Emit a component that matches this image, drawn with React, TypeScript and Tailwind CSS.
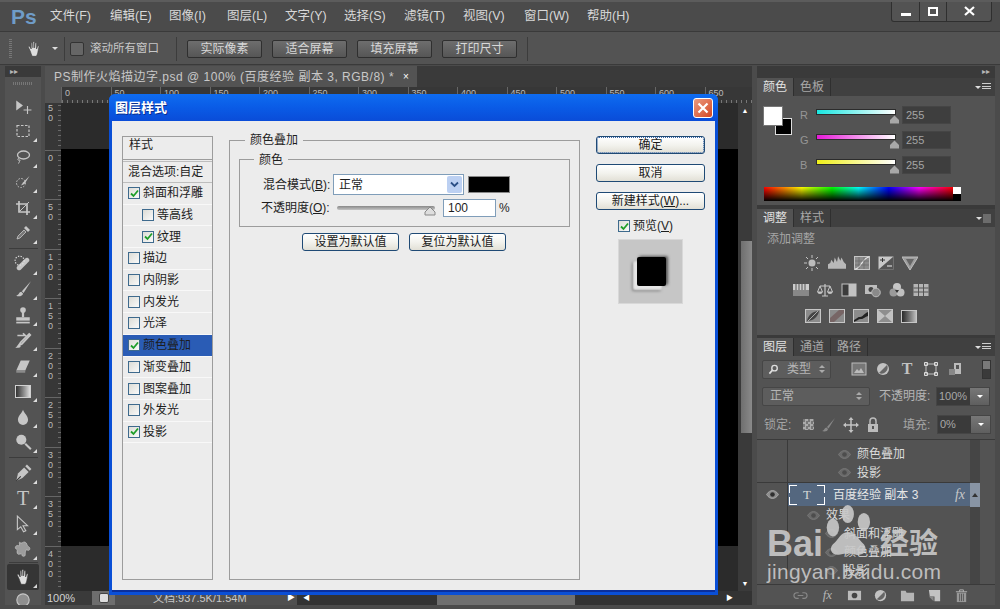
import type { ReactNode } from "react";

const menus = [
  { label: "文件(F)", w: "w-[43px]" },
  { label: "编辑(E)", w: "w-[42px]" },
  { label: "图像(I)", w: "w-[41px]" },
  { label: "图层(L)", w: "w-[41px]" },
  { label: "文字(Y)", w: "w-[42px]" },
  { label: "选择(S)", w: "w-[43px]" },
  { label: "滤镜(T)", w: "w-[42px]" },
  { label: "视图(V)", w: "w-[44px]" },
  { label: "窗口(W)", w: "w-[46px]" },
  { label: "帮助(H)", w: "w-[44px]" },
];
const fxRows = [
  { name: "斜面和浮雕", on: true },
  { name: "等高线", sub: true },
  { name: "纹理", on: true, sub: true },
  { name: "描边" },
  { name: "内阴影" },
  { name: "内发光" },
  { name: "光泽" },
  { name: "颜色叠加", on: true, active: true },
  { name: "渐变叠加" },
  { name: "图案叠加" },
  { name: "外发光" },
  { name: "投影", on: true },
];
const rulerTop = ["0", "50", "100", "150", "200", "250", "300", "350", "400", "450", "500", "550", "600", "650"];
const rulerLeft = ["50", "0", "50", "100", "150", "200", "250", "300", "350", "400"];

function Ic({ s = 16, children, c = "" }: { s?: number; children: ReactNode; c?: string }) {
  return (
    <svg width={s} height={s} viewBox="0 0 16 16" className={`shrink-0 ${c}`}>
      {children}
    </svg>
  );
}

const G = "#c6c6c6";

function Tool({ children, corner = true, active = false }: { children: ReactNode; corner?: boolean; active?: boolean }) {
  return (
    <div className={`relative flex h-[25.5px] w-[32px] shrink-0 items-center justify-center ${active ? "rounded-[2px] bg-[#353535]" : ""}`}>
      {children}
      {corner && <span className="absolute bottom-[2px] right-[2px] size-0 border-b-[4px] border-l-[4px] border-b-white/80 border-l-transparent" />}
    </div>
  );
}

function Sep({ wide = true }: { wide?: boolean }) {
  return <div className={`h-px w-[29px] shrink-0 bg-[#3c3c3c] ${wide ? "my-[2px]" : ""}`} />;
}

function Hand({ s = 18 }: { s?: number }) {
  return (
    <Ic s={s}>
      <path d="M4.5 9.5 3 6.5c-.3-.9.9-1.3 1.3-.5L5.5 8V3c0-.9 1.2-.9 1.3 0l.3 4V2c0-.9 1.3-.9 1.4 0v5l.5-4.2c.1-.9 1.3-.8 1.3.1V8l.9-2.4c.3-.8 1.4-.5 1.2.4l-1 5c-.3 1.700-1 3-1.500 3.500H6.500C5.700 13.500 5.200 11 4.500 9.500Z" fill="#dedede" stroke="#333" strokeWidth=".5" />
    </Ic>
  );
}

function Eye({ dim = false }: { dim?: boolean }) {
  return (
    <svg width="13" height="9" viewBox="0 0 13 9" className="shrink-0">
      <path d="M.5 4.500C2.500 1.500 4.500.5 6.500.5s4 1 6 4c-2 3-4 4-6 4s-4-1-6-4Z" fill={dim ? "#6a6a6a" : "#8e8e8e"} stroke={dim ? "#7e7e7e" : "#b5b5b5"} strokeWidth=".7" />
      <circle cx="6.500" cy="4.500" r="2.300" fill={dim ? "#4d4d4d" : "#2f2f2f"} />
    </svg>
  );
}

function Toolbar() {
  return (
    <div className="flex w-[36px] shrink-0 flex-col items-center overflow-hidden bg-[#535353]">
      <div className="flex h-[11px] w-full shrink-0 items-center bg-[#3a3a3a] pl-[5px] text-[8px] leading-none text-[#b5b5b5]">▸▸</div>
      <div className="mt-[5px] mb-[8px] h-[3px] w-[20px] shrink-0 bg-[repeating-linear-gradient(90deg,#777_0,#777_1px,transparent_1px,transparent_2px)]" />
      <div className="flex flex-col items-center">
        <Tool corner={false}>
          <Ic s={18}><path d="M2 3v9l6-4.500Z" fill={G} /><path d="M12 8v7M8.500 11.500h7" stroke={G} strokeWidth="1" /></Ic>
        </Tool>
        <Tool><Ic><rect x="2" y="2.500" width="12" height="11" fill="none" stroke={G} strokeWidth="1.200" strokeDasharray="2.500 1.500" /></Ic></Tool>
        <Tool><Ic><ellipse cx="8.500" cy="6" rx="6" ry="4" fill="none" stroke={G} strokeWidth="1.300" /><path d="M4 9c-2 1-1 3 .5 2s-.5 2.500-1 3.500" fill="none" stroke={G} strokeWidth="1" /></Ic></Tool>
        <Tool><Ic><circle cx="6" cy="9" r="4.500" fill="none" stroke={G} strokeDasharray="1.500 1.500" /><path d="M14.500 2 8 8.500l-2 3 3.500-1.500Z" fill={G} /></Ic></Tool>
        <Tool><Ic><path d="M1 4h11v11M4 1v11h11" fill="none" stroke={G} strokeWidth="1.700" /><path d="M4 12 14 2" stroke={G} /></Ic></Tool>
        <Tool><Ic><path d="m2 14 1-3 6-6 2 2-6 6Z" fill="#777" stroke={G} strokeWidth=".8" /><path d="m9 3 2-2 4 4-2 2Z" fill={G} /></Ic></Tool>
      </div>
      <Sep />
      <div className="flex flex-col items-center">
        <Tool><Ic s={18}><path d="m3 10 7-7c2-2 5 1 3 3l-7 7c-2 2-5-1-3-3Z" fill={G} /><circle cx="5" cy="5" r="4" fill="none" stroke="#ddd" strokeDasharray="1.200 1.200" /></Ic></Tool>
        <Tool><Ic s={18}><path d="M15 1 7 10l1.500 1.500Z" fill={G} /><path d="M6.500 10.500c-2 0-2 3-4.500 3.500 2 1 6 .5 6-2Z" fill={G} /></Ic></Tool>
        <Tool><Ic s={18}><circle cx="8" cy="3.500" r="2.500" fill={G} /><rect x="7" y="5" width="2" height="5" fill={G} /><rect x="2" y="10" width="12" height="3" fill={G} /><rect x="2" y="14" width="12" height="1.500" fill={G} /></Ic></Tool>
        <Tool><Ic s={18}><path d="M3 4h7l-2-2M14 2 6 10l-2 3 3-1.500L15 3" fill="none" stroke={G} strokeWidth="1.500" /><path d="M1 15c2-.5 2-3 4-3l1 2c-1 1-3 1-5 1Z" fill={G} /></Ic></Tool>
        <Tool><Ic s={18}><path d="M6 3h8l-4 9H2Z" fill={G} /><path d="M2 12h8v2H2Z" fill="#8a8a8a" /></Ic></Tool>
        <Tool>
          <div className="h-[13px] w-[16px] border border-[#d0d0d0] bg-gradient-to-r from-[#333] to-[#ddd]" />
        </Tool>
        <Tool><Ic s={18}><path d="M8 1.500c1 3 4.500 5.500 4.500 9a4.500 4.500 0 0 1-9 0c0-3.500 3.500-6 4.500-9Z" fill={G} /></Ic></Tool>
        <Tool><Ic s={18}><circle cx="6.500" cy="6" r="4.500" fill={G} /><path d="m10 9.500 5 5" stroke={G} strokeWidth="1.800" /></Ic></Tool>
      </div>
      <Sep />
      <div className="flex flex-col items-center">
        <Tool><Ic s={18}><path d="m2 15 1.500-6.500L9 3l4 4-5.500 5.500Z" fill={G} /><path d="m10 2 1.500-1.500 4 4L14 6Z" fill={G} /><path d="m2 15 4-4" stroke="#333" /></Ic></Tool>
        <Tool>
          <span className="font-['Liberation_Serif',serif] text-[20px] leading-none text-[#c6c6c6]">T</span>
        </Tool>
        <Tool><Ic s={18}><path d="M3 1v12l3-2.500 2.500 4.500 2-1-2.500-4.500h4Z" fill="#555" stroke={G} strokeWidth="1" /></Ic></Tool>
        <Tool><Ic s={18}><path d="M5 2c2 2 3-1 5 0s1 3 3 4 1 4-1 3-2 2-2 4-3 2-3 0-3 1-4-1 1-3-1-4 0-4 2-3 0-3 1-3Z" fill="#9c9c9c" stroke={G} strokeWidth=".6" /></Ic></Tool>
      </div>
      <Sep wide={false} />
      <div className="mt-px flex flex-col items-center">
        <Tool active><Hand /></Tool>
        <div className="-mt-[2px]"><Tool corner={false}><Ic s={18}><circle cx="8" cy="8" r="5.500" fill="#8f8f8f" stroke={G} /></Ic></Tool></div>
      </div>
    </div>
  );
}

function Ruler() {
  return (
    <div className="flex h-[16px] shrink-0 bg-[#373737]">
      <div className="h-full w-[16px] shrink-0 bg-[#535353]" />
      <div className="flex min-w-0 flex-1 overflow-hidden">
        {rulerTop.map((n) => (
          <div key={n} className="relative h-full w-[49.5px] shrink-0 border-l border-[#666] pl-[3px] text-[9px] leading-[13px] text-[#bbb]">
            {n}
            <div className="absolute bottom-0 left-0 h-[3px] w-full bg-[repeating-linear-gradient(90deg,#777_0,#777_1px,transparent_1px,transparent_5px)]" />
          </div>
        ))}
      </div>
    </div>
  );
}

function Pasteboard() {
  return (
    <div className="flex min-h-0 flex-1">
      <div className="w-[16px] shrink-0 overflow-hidden bg-[#373737]">
        <div className="-mt-[3px]">
          {rulerLeft.map((n, i) => (
            <div key={i} className="flex h-[49.5px] flex-col items-start border-t border-[#666] pt-[2px] pl-[3px] bg-[repeating-linear-gradient(180deg,transparent_0,transparent_4px,#6a6a6a_4px,#6a6a6a_5px)] bg-[length:3px_100%] bg-right bg-no-repeat">
              {n.split("").map((d, j) => (
                <span key={j} className="text-[9px] leading-[10px] text-[#bbb]">{d}</span>
              ))}
            </div>
          ))}
        </div>
      </div>
      <div className="flex min-w-0 flex-1 flex-col">
        <div className="h-[46px] shrink-0 bg-[#2b2b2b]" />
        <div className="flex-1 bg-black" />
        <div className="h-[45px] shrink-0 bg-[#2b2b2b]" />
      </div>
      <div className="flex w-[14px] shrink-0 flex-col bg-[#3a3a3a]">
        <div className="flex h-[16px] shrink-0 items-center justify-center text-[7px] text-white">▲</div>
        <div className="ml-[3px] mt-[122px] h-[192px] w-[11px] bg-gradient-to-r from-[#6f6f6f] to-[#8a8a8a]" />
        <div className="mt-auto flex h-[14px] shrink-0 items-center justify-center text-[7px] text-white">▼</div>
      </div>
    </div>
  );
}

function StatusBar() {
  return (
    <div className="flex h-[14px] shrink-0 items-center bg-[#3a3a3a] text-[#d2d2d2]">
      <div className="flex h-full w-[47px] shrink-0 items-center bg-[#3a3a3a] pl-[2px] text-[11px]">100%</div>
      <div className="flex h-full w-[23px] shrink-0 items-center justify-center bg-[#6e6e6e]">
        <div className="h-[10px] w-[10px] rounded-[2px] border border-[#444] bg-[#ddd]" />
      </div>
      <div className="flex h-full w-[170px] shrink-0 items-center bg-[#505050] pl-[38px] text-[11px] text-[#c8c8c8]">文档:937.5K/1.54M</div>
      <div className="flex h-full w-[12px] shrink-0 items-center justify-center bg-[#505050] text-[8px] text-white">▶</div>
      <div className="flex h-full flex-1 items-center bg-[#333]">
        <span className="ml-[6px] text-[7px] text-white">◀</span>
        <div className="ml-[127px] h-full w-[138px] bg-[#6f6f6f]" />
        <span className="ml-auto mr-[19px] text-[7px] text-white">▶</span>
      </div>
    </div>
  );
}

function Check({ on }: { on?: boolean }) {
  return (
    <div className="flex size-[12px] shrink-0 items-center justify-center border border-[#3e6a8d] bg-gradient-to-br from-[#dcdcd6] to-[#fafafa]">
      {on && (
        <svg width="9" height="9" viewBox="0 0 9 9">
          <path d="M1 4.500 3.500 7 8 1.500" fill="none" stroke="#1f9e2a" strokeWidth="1.800" />
        </svg>
      )}
    </div>
  );
}

function XpButton({ label, w, def }: { label: ReactNode; w: string; def?: boolean }) {
  return (
    <button className={`flex h-[18px] ${w} items-center justify-center rounded-[3px] border border-[#1f4a75] bg-gradient-to-b from-white via-[#f3f3ee] to-[#e2e0d6] text-[12px] leading-none text-[#1a1a1a] ${def ? "outline-1 -outline-offset-2 outline-dotted outline-[#3d68a8]" : ""}`}>
      {label}
    </button>
  );
}

function Dialog() {
  return (
    <div className="absolute left-[109px] top-[94px] flex h-[501px] w-[609px] flex-col overflow-hidden rounded-t-[6px] bg-[#0a4fd6]">
      <div className="flex h-[27px] shrink-0 items-center justify-between bg-gradient-to-b from-[#0f6cf0] via-[#0a5be6] to-[#0a4cd8] pl-[6px] pr-[5px]">
        <span className="text-[13px] font-bold text-white [text-shadow:1px_1px_0_#0a2f90]">图层样式</span>
        <div className="flex size-[20px] items-center justify-center rounded-[3px] border border-white bg-gradient-to-br from-[#e99a80] to-[#d4431c]">
          <svg width="12" height="12" viewBox="0 0 12 12"><path d="m1.500 1.500 9 9m0-9-9 9" stroke="white" strokeWidth="2.200" /></svg>
        </div>
      </div>
      <div className="mx-[3px] mb-[3px] flex min-h-0 flex-1 border-b-2 border-[#0a2f9c] bg-[#ececec] pl-[10px] pt-[15px] text-[#1d1d1d]">
        <div className="flex h-[444px] w-[91px] shrink-0 flex-col border border-[#9c9c9c] text-[12px]">
          <div className="h-[23px] shrink-0 border-b border-[#9c9c9c] pl-[6px] leading-[16px]">样式</div>
          <div className="mt-[1px] h-[22px] shrink-0 border-y border-[#bdbdbd] pl-[5px] leading-[20px] whitespace-nowrap">混合选项:自定</div>
          {fxRows.map((r) => (
            <div key={r.name} className={`flex h-[21.7px] shrink-0 items-center gap-[3px] border-b border-[#f8f8f8] ${r.sub ? "pl-[19px]" : "pl-[5px]"} ${r.active ? "bg-[#2a5cb5]" : ""}`}>
              <Check on={r.on} />
              <span className="whitespace-nowrap">{r.name}</span>
            </div>
          ))}
        </div>
        <div className="relative ml-[16px] mt-[4px] h-[440px] w-[351px] shrink-0 border border-[#9c9c9c] px-[9px] pt-[18px] text-[12px]">
          <span className="absolute -top-[9px] left-[15px] bg-[#ececec] px-[5px] leading-[16px]">颜色叠加</span>
          <div className="relative h-[68px] border border-[#9c9c9c] pt-[14px]">
            <span className="absolute -top-[8px] left-[14px] bg-[#ececec] px-[5px] leading-[16px]">颜色</span>
            <div className="flex items-center pl-[23px]">
              <span className="w-[70px] whitespace-nowrap">混合模式(<u>B</u>):</span>
              <div className="flex h-[21px] w-[131px] items-center justify-between border border-[#7f9db9] bg-white pl-[5px] pr-[1px]">
                正常
                <div className="flex h-[17px] w-[15px] items-center justify-center rounded-[2px] bg-[#bcd0f2]">
                  <svg width="9" height="7" viewBox="0 0 9 7"><path d="m1 1.500 3.500 3.500L8 1.500" fill="none" stroke="#2b4f86" strokeWidth="1.800" /></svg>
                </div>
              </div>
              <div className="ml-[4px] h-[17px] w-[42px] border border-[#888] bg-black" />
            </div>
            <div className="mt-[4px] flex items-center pl-[21px]">
              <span className="w-[76px] whitespace-nowrap">不透明度(<u>O</u>):</span>
              <div className="relative h-[4px] w-[98px] rounded-full bg-gradient-to-b from-[#888] to-[#c4c4c4]">
                <svg width="12" height="10" viewBox="0 0 12 10" className="absolute -right-[1px] -top-[0px]"><path d="M1 9V6l5-5 5 5v3Z" fill="#dedede" stroke="#888" /></svg>
              </div>
              <div className="ml-[8px] flex h-[18px] w-[53px] items-center border border-[#7f9db9] bg-white pl-[4px]">100</div>
              <span className="ml-[3px]">%</span>
            </div>
          </div>
          <div className="mt-[6px] flex gap-[10px] pl-[63px]">
            <XpButton w="w-[97px]" label="设置为默认值" />
            <XpButton w="w-[97px]" label="复位为默认值" />
          </div>
        </div>
        <div className="ml-[16px] flex w-[109px] shrink-0 flex-col items-center">
          <XpButton w="w-full" def label="确定" />
          <div className="mt-[10px]"><XpButton w="w-[109px]" label="取消" /></div>
          <div className="mt-[10px]"><XpButton w="w-[109px]" label={<span>新建样式(<u>W</u>)...</span>} /></div>
          <div className="mt-[9px] flex h-[14px] w-full items-center gap-[3px] pl-[22px] text-[12px]">
            <Check on />
            <span>预览(<u>V</u>)</span>
          </div>
          <div className="mt-[6px] flex h-[65px] w-[65px] items-center justify-center border border-[#d8d8d8] bg-[#c6c6c6] pb-[1px] pl-[2px]">
            <div className="size-[29px] rounded-[2px] bg-black shadow-[-4px_4px_2px_#e6e6e6,-5px_5px_3px_#777,2px_-1px_3px_#555]" />
          </div>
        </div>
      </div>
    </div>
  );
}

function TabBar({ tabs, menu }: { tabs: string[]; menu?: ReactNode }) {
  return (
    <div className="flex h-[18px] shrink-0 items-stretch bg-[#404040] text-[12px]">
      {tabs.map((t, i) => (
        <div key={t} className={`flex w-[37px] items-center justify-center border-r border-[#2f2f2f] ${i === 0 ? "bg-[#535353] text-[#e2e2e2]" : "text-[#a8a8a8]"}`}>{t}</div>
      ))}
      <div className="ml-auto flex items-center pr-[4px]">{menu}</div>
    </div>
  );
}

function MenuLines() {
  return (
    <div className="flex items-center gap-[1px]">
      <span className="size-0 border-x-[3px] border-t-[3px] border-x-transparent border-t-[#ddd]" />
      <span className="h-[8px] w-[9px] bg-[repeating-linear-gradient(180deg,#ccc_0,#ccc_1px,transparent_1px,transparent_2.500px)]" />
    </div>
  );
}

function Channel({ label, from }: { label: string; from: string }) {
  return (
    <div className="flex h-[18px] items-center">
      <span className="w-[16px] text-[11px] text-[#969696]">{label}</span>
      <div className="relative mb-[6px] h-[6px] w-[80px] border border-[#2c2c2c]" style={{ background: `linear-gradient(90deg, ${from}, #fff)` }}>
        <svg width="11" height="10" viewBox="0 0 11 10" className="absolute -right-[5px] top-[4px]"><path d="M1 9.500V6l4.500-4.500L10 6v3.500Z" fill="#a8a8a8" /></svg>
      </div>
      <div className="ml-[6px] flex h-[18px] w-[49px] items-center border border-[#454545] bg-[#3e3e3e] pl-[3px] text-[11px] text-[#a5a5a5]">255</div>
    </div>
  );
}

function ColorPanel() {
  return (
    <div className="h-[127px] shrink-0 bg-[#535353]">
      <TabBar tabs={["颜色", "色板"]} menu={<MenuLines />} />
      <div className="flex pl-[6px] pt-[10px]">
        <div className="relative size-[29px] shrink-0">
          <div className="absolute bottom-0 right-0 size-[17px] border border-[#ddd] bg-black" />
          <div className="absolute left-0 top-0 size-[20px] border border-[#777] bg-white" />
        </div>
        <div className="ml-[8px] flex flex-col gap-[7px]">
          <Channel label="R" from="#19e6e0" />
          <Channel label="G" from="#e619d8" />
          <Channel label="B" from="#f0f019" />
        </div>
      </div>
      <div className="ml-[7px] mt-[13px] flex h-[14px] w-[197px]">
        <div className="flex-1 bg-[linear-gradient(180deg,transparent_0%,#000_100%),linear-gradient(90deg,#f00,#ff0_20%,#0f0_36%,#0ff_50%,#00f_66%,#f0f_82%,#f00_100%)]" />
        <div className="flex w-[8px] flex-col"><div className="flex-1 bg-white" /><div className="flex-1 bg-black" /></div>
      </div>
    </div>
  );
}

const adjRows = [
  ["sun", "hist", "curve", "exp", "tri"],
  ["bars", "bal", "split", "cam", "mix", "grid"],
  ["inv", "post", "thr", "map", "grad"],
];

function AdjIcon({ k }: { k: string }) {
  const box = (
    <rect x=".5" y="1.500" width="15" height="13" fill="#8b8b8b" stroke="#c6c6c6" strokeWidth="1" />
  );
  switch (k) {
    case "sun":
      return <Ic><circle cx="8" cy="8" r="3.500" fill="#bbb" /><path d="M8 0v3M8 13v3M0 8h3M13 8h3M2 2l2 2M12 12l2 2M14 2l-2 2M4 12l-2 2" stroke="#c6c6c6" /></Ic>;
    case "hist":
      return <Ic s={18}><path d="M0 13V9l2-1 1-3 2 3 1-5 2 4 1-5 2 4 1-3 2 4 2 2v4Z" fill="#b9b9b9" /></Ic>;
    case "curve":
      return <Ic>{box}<path d="M1 14C7 14 8 3 15 2" fill="none" stroke="#eee" strokeWidth="1.200" /><path d="M5 2v12M10 2v12M1 6h14M1 10h14" stroke="#666" strokeWidth=".6" /></Ic>;
    case "exp":
      return <Ic><rect x=".5" y="1.500" width="15" height="13" fill="#c8c8c8" /><path d="M.5 14.500 15.500 1.500v13Z" fill="#555" /><path d="M2 5h5M4.500 3v4" stroke="#333" /><path d="M9 11h5" stroke="#eee" /></Ic>;
    case "tri":
      return <Ic><path d="M0 2h16L8 15Z" fill="#9e9e9e" stroke="#bdbdbd" /><path d="M4 4h8l-4 7Z" fill="#666" /></Ic>;
    case "bars":
      return <Ic><rect x="0" y="2" width="16" height="6" fill="#ccc" /><path d="M3 2v6M6 2v6M9 2v6M12 2v6" stroke="#555" /><rect x="0" y="8" width="16" height="6" fill="#888" /></Ic>;
    case "bal":
      return <Ic><path d="M8 2v12M3 4h10M5 14h6" stroke="#c6c6c6" strokeWidth="1.200" /><path d="M3 4 0.500 10h5ZM13 4l-2.500 6h5Z" fill="none" stroke="#c6c6c6" /><path d="M.5 10a2.500 2 0 0 0 5 0ZM10.500 10a2.500 2 0 0 0 5 0Z" fill="#c6c6c6" /></Ic>;
    case "split":
      return <Ic><rect x=".5" y="1.500" width="15" height="13" fill="#c2c2c2" /><rect x="1.500" y="2.500" width="6" height="11" fill="#3c3c3c" /></Ic>;
    case "cam":
      return <Ic><rect x="0" y="3" width="12" height="9" fill="#bdbdbd" /><circle cx="6" cy="7.500" r="2.500" fill="#444" /><circle cx="11" cy="10.500" r="4.300" fill="#8a8a8a" stroke="#bbb" /></Ic>;
    case "mix":
      return <Ic><circle cx="8" cy="5" r="4" fill="#c6c6c6" /><circle cx="4.500" cy="10.500" r="4" fill="#9a9a9a" /><circle cx="11.500" cy="10.500" r="4" fill="#c0c0c0" /><path d="M6 8h4l-2 3Z" fill="#333" /></Ic>;
    case "grid":
      return <Ic><rect x=".5" y="2" width="15" height="12" fill="#b5b5b5" /><path d="M5.500 2v12M10.500 2v12M.5 6h15M.5 10h15" stroke="#555" /></Ic>;
    case "inv":
      return <Ic>{box}<path d="M2 13C3 7 8 3 14 3c-1 6-6 10-12 10Z" fill="#444" /><path d="M3 13 13 3" stroke="#aaa" /></Ic>;
    case "post":
      return <Ic>{box}<path d="M1 10 10 2h5v3L5 14H1Z" fill="#6a4d4d" opacity=".6" /></Ic>;
    case "thr":
      return <Ic>{box}<path d="M1 12c3-1 3-3 6-3s3-3 8-5v4c-4 1-4 3-7 3s-4 2-7 3Z" fill="#222" /></Ic>;
    case "map":
      return <Ic><rect x=".5" y="1.500" width="15" height="13" fill="#8e8e8e" stroke="#c6c6c6" /><path d="M.5 1.500 8 8 .5 14.500ZM15.500 1.500 8 8l7.500 6.500Z" fill="#c2c2c2" /></Ic>;
    default:
      return <div className="h-[13px] w-[16px] border border-[#c6c6c6] bg-gradient-to-r from-[#2a2a2a] to-[#bdbdbd]" />;
  }
}

function AdjustPanel() {
  return (
    <div className="mt-[4px] h-[126px] shrink-0 bg-[#535353]">
      <TabBar tabs={["调整", "样式"]} menu={
        <div className="flex items-center gap-[1px]">
          <span className="size-0 border-x-[3px] border-t-[3px] border-x-transparent border-t-[#ddd]" />
          <span className="h-[9px] w-[8px] bg-[#6c6c6c]" />
        </div>
      } />
      <div className="pl-[10px] pt-[4px] text-[12px] leading-[16px] text-[#a5a5a5]">添加调整</div>
      <div className="mt-[8px] flex flex-col gap-[10.500px] pr-[30px]">
        {adjRows.map((row, i) => (
          <div key={i} className="flex h-[16px] items-center justify-center gap-[8px]">
            {row.map((k) => <AdjIcon key={k} k={k} />)}
          </div>
        ))}
      </div>
    </div>
  );
}

function Spin() {
  return (
    <div className="flex flex-col gap-[2px]">
      <span className="size-0 border-x-[3px] border-b-[3px] border-x-transparent border-b-[#aaa]" />
      <span className="size-0 border-x-[3px] border-t-[3px] border-x-transparent border-t-[#aaa]" />
    </div>
  );
}

function Drop({ value }: { value: string }) {
  return (
    <div className="flex h-[19px] w-[54px] border border-[#454545]">
      <div className="flex flex-1 items-center bg-[#3a3a3a] pl-[2px] text-[11px] text-[#a8a8a8]">{value}</div>
      <div className="flex w-[19px] items-center justify-center bg-gradient-to-b from-[#777] to-[#5f5f5f]">
        <span className="size-0 border-x-[3px] border-t-[3px] border-x-transparent border-t-white" />
      </div>
    </div>
  );
}

function EffectRow({ name, eyeLeft }: { name: string; eyeLeft: string }) {
  return (
    <div className="flex h-[18.500px] shrink-0 items-center">
      <div className="h-full w-[31px] shrink-0 border-r border-[#3a3a3a]" />
      <div className={`shrink-0 ${eyeLeft}`}><Eye dim /></div>
      <span className="ml-[6px] whitespace-nowrap text-[12px] text-[#dcdcdc]">{name}</span>
    </div>
  );
}

function ThumbCorners() {
  return (
    <>
      <span className="absolute left-0 top-0 size-[8px] border-l border-t border-white" />
      <span className="absolute right-0 top-0 size-[8px] border-r border-t border-white" />
      <span className="absolute bottom-0 left-0 size-[8px] border-b border-l border-white" />
      <span className="absolute bottom-0 right-0 size-[8px] border-b border-r border-white" />
    </>
  );
}

function LayersPanel() {
  return (
    <div className="mt-[3px] flex min-h-0 flex-1 flex-col bg-[#535353]">
      <TabBar tabs={["图层", "通道", "路径"]} menu={<MenuLines />} />
      <div className="flex h-[26px] shrink-0 items-center pl-[5px]">
        <div className="flex h-[19px] w-[69px] items-center justify-between rounded-[2px] border border-[#464646] bg-[#5d5d5d] px-[5px] text-[12px] text-[#b5b5b5]">
          <Ic s={11}><circle cx="9.500" cy="6" r="4" fill="none" stroke="#ddd" strokeWidth="2" /><path d="M6.500 9 2 14" stroke="#ddd" strokeWidth="2.500" /></Ic>
          <span>类型</span>
          <Spin />
        </div>
        <div className="ml-[20px] flex w-[112px] items-center justify-between">
          <Ic><rect x="1" y="2" width="14" height="12" fill="#777" stroke="#bbb" /><path d="m3 12 3-4 2 2 2-3 3 5Z" fill="#bbb" /></Ic>
          <Ic><circle cx="8" cy="8" r="6" fill="#c2c2c2" /><path d="M12 4a6 6 0 0 1-8 8Z" fill="#666" /></Ic>
          <span className="w-[16px] text-center font-['Liberation_Serif',serif] text-[16px] font-bold leading-none text-[#c2c2c2]">T</span>
          <Ic><rect x="3" y="3" width="10" height="10" fill="none" stroke="#c2c2c2" /><path d="M1.500 1.500h3v3h-3zM11.500 1.500h3v3h-3zM1.500 11.500h3v3h-3zM11.500 11.500h3v3h-3z" fill="none" stroke="#ddd" /></Ic>
          <Ic><path d="M7 2h7v11H7Z" fill="#bbb" /><path d="M2 8h6v6H2Z" fill="#888" /><path d="M9 4h3v4H9Z" fill="#555" /></Ic>
        </div>
        <div className="ml-[19px] flex h-[19px] w-[9px] flex-col border border-[#333]">
          <div className="flex-1 bg-[#7a7a7a]" /><div className="flex-1 bg-[#3a3a3a]" />
        </div>
      </div>
      <div className="flex h-[28px] shrink-0 items-center pl-[5px]">
        <div className="flex h-[19px] w-[108px] items-center justify-between rounded-[2px] border border-[#464646] bg-[#5d5d5d] px-[7px] text-[12px] text-[#b5b5b5]">
          <span>正常</span><Spin />
        </div>
        <span className="ml-[9px] w-[57px] whitespace-nowrap text-[12px] text-[#b5b5b5]">不透明度:</span>
        <Drop value="100%" />
      </div>
      <div className="flex h-[30px] shrink-0 items-center border-b border-[#3a3a3a] pl-[7px]">
        <span className="w-[39px] whitespace-nowrap text-[12px] text-[#a5a5a5]">锁定:</span>
        <div className="flex w-[78px] items-center justify-between">
          <div className="size-[11px] bg-[conic-gradient(#aaa_25%,#777_0_50%,#aaa_0_75%,#777_0)] bg-[length:5px_5px]" />
          <Ic><path d="M15 1 7 10l1.500 1.500Z" fill="#888" /><path d="M6.500 10.500c-2 0-2 3-4.500 3.500 2 1 6 .5 6-2Z" fill="#888" /></Ic>
          <Ic><path d="M8 1v14M1 8h14" stroke="#c2c2c2" strokeWidth="1.500" /><path d="M8 0 5.500 3h5ZM8 16l-2.500-3h5ZM0 8l3-2.500v5ZM16 8l-3-2.500v5Z" fill="#c2c2c2" /></Ic>
          <Ic><rect x="3" y="7" width="10" height="8" fill="#bbb" /><path d="M5 7V4a3 3 0 0 1 6 0v3" fill="none" stroke="#bbb" strokeWidth="1.500" /><rect x="7" y="9" width="2" height="3" fill="#555" /></Ic>
        </div>
        <span className="ml-[22px] w-[34px] whitespace-nowrap text-[12px] text-[#a5a5a5]">填充:</span>
        <Drop value="0%" />
      </div>
      <div className="mr-[15px] flex min-h-0 flex-1">
        <div className="relative flex min-w-0 flex-1 flex-col overflow-hidden">
          <div className="h-[5px] shrink-0"><div className="h-full w-[31px] border-r border-[#3a3a3a]" /></div>
          <EffectRow name="颜色叠加" eyeLeft="ml-[50px]" />
          <EffectRow name="投影" eyeLeft="ml-[50px]" />
          <div className="flex h-[24px] shrink-0 items-center border-t border-[#3a3a3a]">
            <div className="flex h-full w-[31px] shrink-0 items-center justify-center border-r border-[#3a3a3a]"><Eye /></div>
            <div className="flex h-full min-w-0 flex-1 items-center bg-[#54677f]">
              <div className="relative ml-[1px] flex h-[20px] w-[36px] shrink-0 items-center justify-center font-['Liberation_Serif',serif] text-[13px] text-[#d8d8d8]">
                <ThumbCorners />
                T
              </div>
              <span className="ml-[8px] whitespace-nowrap text-[12px] text-[#e6e6e6]">百度经验 副本 3</span>
              <span className="ml-auto pr-[5px] font-['Liberation_Serif',serif] text-[14px] italic text-[#c8c8c8]">fx</span>
            </div>
          </div>
          <EffectRow name="效果" eyeLeft="ml-[19px]" />
          <EffectRow name="斜面和浮雕" eyeLeft="ml-[37px]" />
          <EffectRow name="颜色叠加" eyeLeft="ml-[37px]" />
          <EffectRow name="投影" eyeLeft="ml-[37px]" />
        </div>
        <div className="flex w-[10px] shrink-0 flex-col bg-[#454545]">
          <div className="mt-[43px] flex h-[24px] w-full items-center justify-center bg-[#8894a4]">
            <span className="size-0 border-x-[3px] border-b-[4px] border-x-transparent border-b-[#333]" />
          </div>
        </div>
      </div>
      <div className="flex h-[21px] shrink-0 items-center justify-between border-t border-[#3a3a3a] pl-[36px] pr-[26px]">
        <Ic s={15}><path d="M6 5H4a3 3 0 0 0 0 6h2M10 5h2a3 3 0 0 1 0 6h-2M5 8h6" fill="none" stroke="#888" strokeWidth="1.200" /></Ic>
        <span className="w-[15px] text-center font-['Liberation_Serif',serif] text-[13px] italic text-[#b5b5b5]">fx</span>
        <Ic s={15}><rect x="1" y="3" width="14" height="10" fill="#bbb" /><circle cx="8" cy="8" r="3" fill="#444" /></Ic>
        <Ic s={15}><circle cx="8" cy="8" r="6" fill="#c2c2c2" /><path d="M12 4a6 6 0 0 1-8 8Z" fill="#666" /></Ic>
        <Ic s={15}><path d="M1 3h5l1 2h8v9H1Z" fill="#b5b5b5" /></Ic>
        <Ic s={15}><path d="M2 2h12v12H8V9H3Z" fill="#c2c2c2" /><path d="M2 9h5v5Z" fill="#888" /></Ic>
        <Ic s={15}><path d="M2 4h12M6 4V2h4v2" stroke="#b5b5b5" fill="none" /><path d="M3 5h10v10H3Z" fill="#999" /><path d="M6 6v8M8 6v8M10 6v8" stroke="#555" /></Ic>
      </div>
    </div>
  );
}

function Watermark() {
  return (
    <div className="pointer-events-none absolute left-[767px] top-[504px] w-[200px] text-[#c9c9c9] opacity-90">
      <div className="flex h-[56px] items-end">
        <span className="font-['Liberation_Sans',sans-serif] text-[36px] font-bold leading-[32px]">Bai</span>
        <svg width="52" height="56" viewBox="0 0 42 50" preserveAspectRatio="none" className="shrink-0">
          <ellipse cx="8" cy="21" rx="5" ry="8" fill="#c9c9c9" />
          <ellipse cx="20" cy="9" rx="5" ry="8" fill="#c9c9c9" />
          <ellipse cx="33" cy="16" rx="5" ry="8" fill="#c9c9c9" />
          <path d="M20 25c6 0 9 7 13 11 4 6-1 11-7 9-4-1-8-1-12 0-6 2-10-4-6-9 4-3 6-11 12-11Z" fill="#c9c9c9" />
        </svg>
        <span className="ml-[5px] whitespace-nowrap text-[29px] font-bold leading-[32px]">经验</span>
      </div>
      <div className="whitespace-nowrap font-['Liberation_Sans',sans-serif] text-[21px] leading-[24px] tracking-[0.3px]">jingyan.baidu.com</div>
    </div>
  );
}

export default function App() {
  return (
    <div className="relative flex h-[609px] w-[1000px] flex-col overflow-hidden bg-[#4b4b4b] font-['Liberation_Sans','Noto_Sans_CJK_SC',sans-serif] text-[12px] text-[#d0d0d0]">
      <div className="flex h-[31px] shrink-0 items-center border-t-2 border-[#5c5c5c] pl-[11px] pb-[1px]">
        <span className="w-[39px] text-[21px] font-bold leading-none text-[#6f9cc8]">Ps</span>
        <div className="flex gap-[17px]">
          {menus.map((m) => (
            <span key={m.label} className={`${m.w} whitespace-nowrap text-[12.500px] text-[#d8d8d8]`}>{m.label}</span>
          ))}
        </div>
        <div className="mb-[9px] ml-auto mr-[8px] flex h-[20px] w-[101px] items-stretch rounded-b-[3px] border border-t-0 border-[#2f2f2f] bg-[#535353]">
          <div className="flex w-[28px] items-end justify-center border-r border-[#2f2f2f] pb-[5px]"><span className="h-[3px] w-[10px] bg-white" /></div>
          <div className="flex w-[27px] items-center justify-center border-r border-[#2f2f2f]"><span className="h-[9px] w-[10px] border-2 border-white" /></div>
          <div className="flex flex-1 items-center justify-center">
            <svg width="11" height="10" viewBox="0 0 11 10"><path d="m1 1 9 8m0-8-9 8" stroke="white" strokeWidth="2.200" /></svg>
          </div>
        </div>
      </div>

      <div className="flex h-[34px] shrink-0 items-center border-y border-[#3a3a3a] bg-[#535353] pl-[9px] pt-[1px]">
        <div className="h-[20px] w-[3px] bg-[repeating-linear-gradient(180deg,#777_0,#777_1px,transparent_1px,transparent_2px)]" />
        <div className="ml-[13px]"><Hand /></div>
        <span className="ml-[9px] size-0 border-x-[3px] border-t-[3px] border-x-transparent border-t-[#ddd]" />
        <div className="ml-[6px] h-[24px] w-px bg-[#3c3c3c]" />
        <div className="ml-[5px] size-[14px] rounded-[2px] border border-[#333] bg-[#666]" />
        <span className="ml-[6px] w-[86px] whitespace-nowrap text-[11.500px] text-[#c8c8c8]">滚动所有窗口</span>
        <div className="h-[24px] w-px bg-[#3c3c3c]" />
        <div className="ml-[10px] flex gap-[10px]">
          {["实际像素", "适合屏幕", "填充屏幕", "打印尺寸"].map((b) => (
            <button key={b} className="h-[18px] w-[75px] rounded-[2px] border border-[#2f2f2f] bg-gradient-to-b from-[#6e6e6e] to-[#565656] text-[12px] leading-none text-[#d8d8d8]">{b}</button>
          ))}
        </div>
        <div className="ml-[10px] h-[24px] w-px bg-[#3c3c3c]" />
      </div>

      <div className="flex min-h-0 flex-1 pl-[5px] pr-[5px] pt-px">
        <Toolbar />
        <div className="ml-[4px] flex w-[707px] shrink-0 flex-col bg-[#3a3a3a]">
          <div className="flex h-[21px] shrink-0 items-stretch">
            <div className="flex w-[372px] items-center gap-[9px] bg-[#535353] pl-[9px] text-[#c8c8c8]">
              <span className="whitespace-nowrap tracking-[0.5px]">PS制作火焰描边字.psd @ 100% (百度经验 副本 3, RGB/8) *</span>
              <span className="text-[10px] leading-none text-white">×</span>
            </div>
          </div>
          <Ruler />
          <Pasteboard />
          <StatusBar />
        </div>
        <div className="ml-[5px] flex w-[238px] shrink-0 flex-col bg-[#3a3a3a]">
          <div className="flex h-[12px] shrink-0 items-center justify-end pr-[5px] text-[8px] leading-none text-[#b5b5b5]">▸▸</div>
          <ColorPanel />
          <AdjustPanel />
          <LayersPanel />
        </div>
      </div>
      <div className="h-[4px] shrink-0" />

      <Dialog />
      <Watermark />
    </div>
  );
}
